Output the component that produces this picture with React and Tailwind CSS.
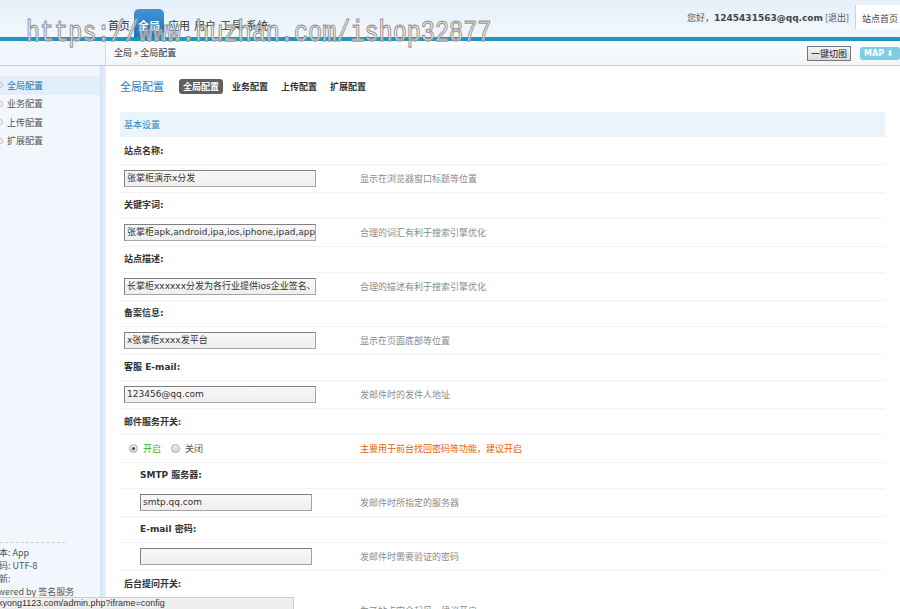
import React from 'react';

const cjk = { fontFamily: '"Noto Sans CJK SC", "Liberation Sans", sans-serif' };
const verdana = { fontFamily: '"DejaVu Sans", "Noto Sans CJK SC", sans-serif' };

const navItems = ['首页', '全局', '应用', '用户', '工具', '系统'];
const sideItems = ['全局配置', '业务配置', '上传配置', '扩展配置'];
const tabs = ['全局配置', '业务配置', '上传配置', '扩展配置'];

const fields = [
  { label: '站点名称:', value: '张掌柜演示x分发', hint: '显示在浏览器窗口标题等位置' },
  { label: '关键字词:', value: '张掌柜apk,android,ipa,ios,iphone,ipad,app', hint: '合理的词汇有利于搜索引擎优化' },
  { label: '站点描述:', value: '长掌柜xxxxxx分发为各行业提供ios企业签名、', hint: '合理的描述有利于搜索引擎优化' },
  { label: '备案信息:', value: 'x张掌柜xxxx发平台', hint: '显示在页面底部等位置' },
  { label: '客服 E-mail:', value: '123456@qq.com', hint: '发邮件时的发件人地址' },
];

function Input({ value, width = 'w-[192px]' }) {
  return (
    <div
      className={`${width} h-[17px] border border-[#a5a5a5] border-t-[#808080] border-l-[#808080] bg-gradient-to-b from-[#f7f7f7] to-[#efefef] px-[2px] text-[9px] leading-[15px] text-[#333] overflow-hidden whitespace-nowrap`}
      style={verdana}
    >
      {value}
    </div>
  );
}

function FieldRow({ label, value, hint, indent = false }) {
  return (
    <>
      <div className={`h-[26px] flex items-center border-b border-[#f3f3f3] ${indent ? 'pl-[20px]' : 'pl-[4px]'}`}>
        <span className="text-[9px] font-bold text-[#333]" style={verdana}>{label}</span>
      </div>
      <div className="h-[28px] flex items-center border-b border-[#f3f3f3]">
        <div className={`w-[240px] ${indent ? 'pl-[20px]' : 'pl-[4px]'}`}>
          <Input value={value} width={indent ? 'w-[172px]' : 'w-[192px]'} />
        </div>
        <span className="text-[9px] text-[#8a8a8a]">{hint}</span>
      </div>
    </>
  );
}

function Radio({ checked }) {
  return (
    <span className="w-[9px] h-[9px] rounded-full border border-[#aaa] bg-gradient-to-b from-[#eee] to-[#d6d6d6] flex items-center justify-center">
      {checked && <span className="w-[3px] h-[3px] rounded-full bg-[#444]" />}
    </span>
  );
}

export default function App() {
  return (
    <div className="relative w-[900px] h-[609px] overflow-hidden bg-white" style={cjk}>
      {/* header */}
      <div className="h-[37px] flex bg-gradient-to-b from-[#e6f0f9] to-[#f1f7fc]">
        <div className="w-[105px]" />
        <div className="flex items-end gap-[4px] pl-[3px]">
          {navItems.map((n) =>
            n === '全局' ? (
              <div
                key={n}
                className="h-[28px] px-[4px] rounded-t-[5px] bg-gradient-to-b from-[#3f93d6] to-[#1f74b9] text-white text-[11px] font-bold flex items-end pb-[4px]"
              >
                {n}
              </div>
            ) : (
              <div key={n} className="text-[11px] text-[#333] pb-[4px]">{n}</div>
            )
          )}
        </div>
        <div className="flex-1" />
        <div className="flex items-start">
          <div className="pt-[11px] pr-[6px] text-[9px] text-[#555]">
            您好，<span className="font-bold text-[#444]" style={verdana}>1245431563@qq.com</span> [退出]
          </div>
          <div className="mt-[5px] h-[24px] w-[45px] bg-white border-l border-[#d0d0d0] text-[9px] text-[#444] pl-[6px] pt-[7px] whitespace-nowrap">
            站点首页
          </div>
        </div>
      </div>
      <div className="h-[4px] bg-[#1c96be]" />

      {/* breadcrumb bar */}
      <div className="h-[25px] flex border-b border-[#c8cdd2] bg-[#f0f6fb]">
        <div className="w-[105px]" />
        <div className="flex-1 flex items-center border-l border-[#d4dbe2] bg-gradient-to-b from-[#fbfdff] to-[#f1f6fa] pl-[8px]">
          <span className="text-[9px] text-[#333]">全局 » 全局配置</span>
          <div className="flex-1" />
          <div className="h-[15px] px-[3px] border border-[#777] bg-gradient-to-b from-[#f6f6f6] to-[#d9d9d9] text-[9px] text-[#222] leading-[13px]">
            一键切图
          </div>
          <div className="ml-[9px] h-[13px] w-[40px] rounded-[3px] bg-[#7fcde4] text-white text-[8px] font-bold leading-[13px] pl-[4px]" style={verdana}>
            MAP ⬇
          </div>
        </div>
      </div>

      {/* body */}
      <div className="flex h-[543px]">
        <div className="w-[100px] bg-[#f1f7fc] flex flex-col overflow-hidden">
          <div className="pt-[10px]">
            {sideItems.map((s, i) => (
              <div
                key={s}
                className={`h-[18.5px] flex items-center text-[9px] ${i === 0 ? 'bg-[#e2eef9] text-[#1a6db3]' : 'text-[#555]'}`}
              >
                <span className="-ml-[3px] mr-[4px] w-[6px] h-[6px] rounded-full border border-[#bbb]" />
                {s}
              </div>
            ))}
          </div>
          <div className="flex-1" />
          <div className="border-t border-dashed border-[#ccc] w-[65px]" />
          <div className="pt-[3px] pb-[11px] -ml-[10px] text-[9px] leading-[13px] text-[#555] whitespace-nowrap">
            <div>版本: App</div>
            <div>编码: UTF-8</div>
            <div>更新:</div>
            <div className="-ml-[3px]">Powered by 签名服务</div>
          </div>
        </div>
        <div className="w-[6px] bg-gradient-to-r from-[#d3e4f4] to-[#e7f0f9]" />

        <div className="flex-1 pl-[14px] pr-[15px]">
          <div className="h-[46px] flex items-center pb-[6px]">
            <span className="text-[11px] text-[#1a7fc0] w-[59px]">全局配置</span>
            <div className="flex items-center gap-[5px]">
              {tabs.map((t, i) => (
                <div
                  key={t}
                  className={`h-[15px] px-[4px] rounded-[3px] text-[9px] font-bold leading-[15px] ${i === 0 ? 'bg-[#5f5f5f] text-white' : 'text-[#333]'}`}
                >
                  {t}
                </div>
              ))}
            </div>
          </div>

          <div className="h-[25px] bg-[#ebf3fb] flex items-center pl-[4px]">
            <span className="text-[9px] text-[#2a88c4]">基本设置</span>
          </div>

          <div className="pt-[2px]">
            {fields.map((f) => (
              <FieldRow key={f.label} {...f} />
            ))}

            <div className="h-[26px] flex items-center border-b border-[#f3f3f3] pl-[4px]">
              <span className="text-[9px] font-bold text-[#333]">邮件服务开关:</span>
            </div>
            <div className="h-[28px] flex items-center border-b border-[#f3f3f3]">
              <div className="w-[240px] pl-[9px] flex items-center text-[9px]">
                <Radio checked />
                <span className="ml-[5px] text-[#2fb52f]">开启</span>
                <span className="ml-[10px]"><Radio /></span>
                <span className="ml-[5px] text-[#555]">关闭</span>
              </div>
              <span className="text-[9px] text-[#e85d00]">主要用于前台找回密码等功能，建议开启</span>
            </div>

            <FieldRow indent label="SMTP 服务器:" value="smtp.qq.com" hint="发邮件时所指定的服务器" />
            <FieldRow indent label="E-mail 密码:" value="" hint="发邮件时需要验证的密码" />

            <div className="h-[26px] flex items-center pl-[4px]">
              <span className="text-[9px] font-bold text-[#333]">后台提问开关:</span>
            </div>
            <div className="h-[28px] flex items-center">
              <div className="w-[240px]" />
              <span className="text-[9px] text-[#8a8a8a]">为了站点安全起见，建议开启</span>
            </div>
          </div>
        </div>
      </div>

      {/* browser status bar */}
      <div className="absolute left-0 bottom-0 w-[294px] h-[12px] bg-[#efefef] border-t border-r border-[#cfcfcf] overflow-hidden">
        <div className="-ml-[2px] text-[9px] leading-[11px] text-[#333] whitespace-nowrap" style={{ fontFamily: '"Liberation Sans", sans-serif' }}>
          kyong1123.com/admin.php?iframe=config
        </div>
      </div>

      {/* watermark */}
      <div
        className="absolute left-[26px] top-[15px] origin-top scale-y-[1.25] text-[23.5px] leading-[30px] text-white/70 pointer-events-none whitespace-nowrap [-webkit-text-stroke:1px_#9a9a9a]"
        style={{ fontFamily: '"Liberation Mono", monospace' }}
      >
        https://www.huzhan.com/ishop32877
      </div>
    </div>
  );
}
